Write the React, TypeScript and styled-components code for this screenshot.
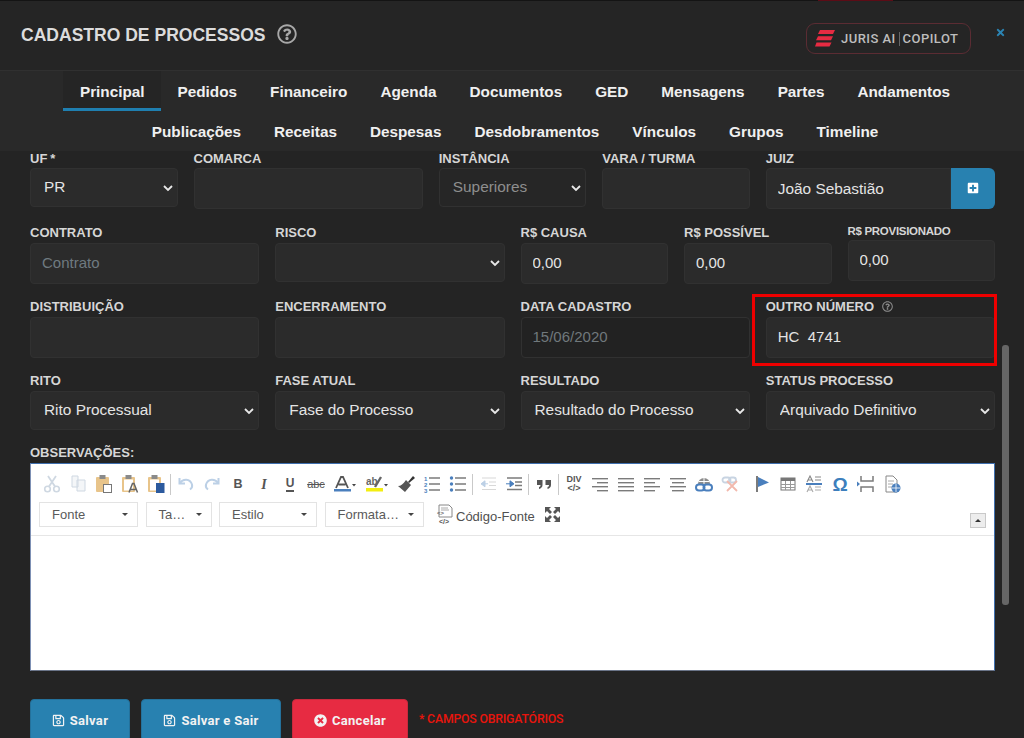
import React from 'react'
import styled, { createGlobalStyle } from 'styled-components'
import { FaRegSave, FaTimesCircle, FaPlusSquare, FaTimes, FaRegQuestionCircle } from 'react-icons/fa'

const GlobalStyle = createGlobalStyle`
    html, body {
        margin: 0;
        height: 100%;
        overflow: hidden;
        background: #242424;
    }

    * {
        box-sizing: border-box;
    }
`

const Modal = styled.div`
    display: flex;
    flex-direction: column;
    position: relative;
    width: 1024px;
    height: 738px;
    overflow: hidden;
    font-family: "Liberation Sans", Arial, sans-serif;
    background: #242424;
`

const Header = styled.header`
    display: flex;
    flex: 0 0 71px;
    align-items: flex-start;
    position: relative;
    padding: 22px 18px 0 21px;
    background: #252525;
    border-top: 1px solid #141414;
    border-bottom: 1px solid #303030;

    &::before {
        content: '';
        position: absolute;
        top: -1px;
        left: 818px;
        width: 75px;
        height: 1px;
        background: #5c0c16;
    }
`

const Title = styled.h1`
    margin: 2px 0 0;
    font-size: 17.55px;
    line-height: 21px;
    font-weight: 700;
    color: #dcdcdc;
`

const HelpMark = styled.span`
    display: inline-flex;
    margin: 1px 0 0 11px;
    font-size: 20px;
    color: #a8a8a8;
`

const CopilotBadge = styled.div`
    display: flex;
    align-items: center;
    width: 165px;
    height: 31px;
    margin-left: auto;
    padding-left: 8px;
    font-family: Roboto, sans-serif;
    font-size: 13px;
    font-weight: 500;
    letter-spacing: 0.45px;
    color: #bdbdbd;
    border: 1px solid #5b2c33;
    border-radius: 9px;
`

const CopilotDivider = styled.span`
    width: 1px;
    height: 14px;
    margin: 0 3px;
    background: #666;
`

const CloseButton = styled.span`
    display: inline-flex;
    margin: 4px 0 0 24px;
    font-size: 11px;
    color: #2b84b3;
`

const Tabs = styled.nav`
    flex: 0 0 80px;
    padding-left: 6px;
    background: #292929;
`

const TabRow = styled.div`
    display: flex;
    justify-content: center;
    height: 40px;
`

const Tab = styled.div<{ $active?: boolean }>`
    height: 40px;
    padding: 0 16.5px;
    font-size: 15.3px;
    line-height: 42px;
    font-weight: 700;
    color: #f0f0f0;
    border-bottom: 3px solid ${p => (p.$active ? '#1f7fb0' : 'transparent')};
    background: ${p => (p.$active ? '#252525' : 'transparent')};
`

const Body = styled.main`
    flex: 1;
    overflow: hidden;
    padding: 0 29px 0 30px;
`

const Label = styled.label<{ $small?: boolean }>`
    display: block;
    height: 16px;
    margin-top: ${p => (p.$small ? -2 : 0)}px;
    margin-bottom: ${p => (p.$small ? 2 : 3)}px;
    font-size: ${p => (p.$small ? 11.5 : 13)}px;
    line-height: 18px;
    font-weight: 700;
    letter-spacing: ${p => (p.$small ? '-0.3px' : '0')};
    white-space: nowrap;
    color: #d6d6d6;
`

const FormGrid = styled.div<{ $first?: boolean }>`
    display: grid;
    grid-template-columns: repeat(12, 1fr);
    column-gap: 16px;
    align-items: start;
    margin-top: ${p => (p.$first ? 0 : 14)}px;

    ${p => p.$first && `
        ${Label} {
            height: 15px;
            margin-bottom: 2px;
            line-height: 16px;
        }
    `}
`

const SecondRow = styled(FormGrid)`
    margin-top: 15px;
`

const Field = styled.div<{ $span: number }>`
    position: relative;
    grid-column: span ${p => p.$span};
    min-width: 0;
`

const Required = styled.span`
    margin-left: 3px;
`

const controlStyles = `
    display: block;
    width: 100%;
    font-family: "Liberation Sans", Arial, sans-serif;
    font-size: 15px;
    color: #e4e4e4;
    background-color: #2b2b2b;
    border: 1px solid #313131;
    border-radius: 4px;
    outline: none;
`

const TextInput = styled.input`
    ${controlStyles}
    height: 41px;
    padding: 0 11px 2px;

    &::placeholder {
        color: #6f7a80;
        opacity: 1;
    }

    &:disabled {
        color: #70787c;
        background-color: #222;
    }
`

const chevron = "url(\"data:image/svg+xml,%3Csvg xmlns='http://www.w3.org/2000/svg' width='12' height='8' viewBox='0 0 12 8'%3E%3Cpath d='M2 2l4 4 4-4' fill='none' stroke='%23e8e8e8' stroke-width='1.8'/%3E%3C/svg%3E\")"

const Select = styled.select<{ $muted?: boolean }>`
    ${controlStyles}
    height: 39px;
    padding: 0 24px 2px 13px;
    font-size: 15.4px;
    color: ${p => (p.$muted ? '#8e8e8e' : '#e4e4e4')};
    background-color: ${p => (p.$muted ? '#262626' : '#2b2b2b')};
    background-image: ${chevron};
    background-repeat: no-repeat;
    background-position: right 3px center;
    appearance: none;
`

const InputGroup = styled.div`
    display: flex;
`

const GroupInput = styled(TextInput)`
    flex: 1;
    min-width: 0;
    padding-bottom: 0;
    font-size: 15.4px;
    border-radius: 4px 0 0 4px;
`

const AddButton = styled.button`
    display: flex;
    flex: 0 0 44px;
    align-items: center;
    justify-content: center;
    padding: 0 0 2px;
    font-size: 12px;
    color: #fff;
    background: #2881b0;
    border: none;
    border-radius: 0 6px 6px 0;
`

const SmallHelp = styled.span`
    display: inline-flex;
    vertical-align: -1px;
    margin-left: 8px;
    font-size: 11px;
    color: #8c8c8c;
`

const Highlight = styled.div`
    position: absolute;
    top: -4px;
    right: -2px;
    bottom: -8px;
    left: -14px;
    border: 3px solid #ee0000;
    pointer-events: none;
`

const EditorBlock = styled.section`
    margin-top: 14px;
`

const Editor = styled.div`
    height: 208px;
    background: #fff;
    border: 1px solid #3f6fae;
    border-bottom-color: #6a7488;
    border-left-color: #7d90b4;
`

const ToolArea = styled.div`
    position: relative;
    height: 72px;
    padding: 7px 0 0 8px;
    border-bottom: 1px solid #e6e6e6;
`

const ToolRow = styled.div`
    display: flex;
    align-items: center;
    height: 26px;
`

const ToolButton = styled.span<{ $width?: number; $gapLeft?: number }>`
    display: flex;
    flex: 0 0 ${p => p.$width ?? 26}px;
    align-items: center;
    justify-content: center;
    height: 26px;
    margin-left: ${p => p.$gapLeft ?? 0}px;
`

const ToolSeparator = styled.span`
    flex: 0 0 1px;
    height: 21px;
    margin: 0 2px 0 1px;
    background: #c9c9c9;
`

const ComboRow = styled.div`
    display: flex;
    align-items: center;
    height: 25px;
    margin-top: 5px;
`

const Combo = styled.div<{ $width: number }>`
    display: flex;
    flex: 0 0 ${p => p.$width}px;
    align-items: center;
    justify-content: space-between;
    height: 25px;
    margin-right: 7.5px;
    padding: 0 9px 0 12px;
    font-family: "Liberation Sans", Arial, sans-serif;
    font-size: 13px;
    color: #5a5a5a;
    background: #fff;
    border: 1px solid #e3e3e3;
`

const Caret = styled.span`
    width: 0;
    height: 0;
    border-top: 3px solid #444;
    border-right: 3px solid transparent;
    border-left: 3px solid transparent;
`

const SourceButton = styled.span`
    display: flex;
    align-items: center;
    gap: 1px;
    margin-left: 5px;
    font-size: 13px;
    color: #505050;
`

const SourceText = styled.span`
    padding-top: 3px;
`

const Collapser = styled.span`
    position: absolute;
    top: 49px;
    right: 8px;
    display: flex;
    align-items: center;
    justify-content: center;
    width: 16px;
    height: 15px;
    background: #ededed;
    border: 1px solid #c9c9c9;

    &::after {
        content: '';
        border-right: 3px solid transparent;
        border-bottom: 3px solid #333;
        border-left: 3px solid transparent;
    }
`

const Actions = styled.div`
    display: flex;
    align-items: center;
    gap: 11px;
    margin-top: 28px;
`

const ActionButton = styled.button<{ $width: number; $danger?: boolean }>`
    display: flex;
    flex: 0 0 ${p => p.$width}px;
    align-items: center;
    justify-content: center;
    gap: 5px;
    height: 42px;
    padding: 0;
    font-family: Roboto, sans-serif;
    font-size: 13px;
    font-weight: 700;
    letter-spacing: 0.3px;
    color: #f2f2f2;
    background: ${p => (p.$danger ? '#e72b42' : '#2881b0')};
    border: 1px solid ${p => (p.$danger ? '#c92a3d' : '#24719b')};
    border-radius: 4px;
`

const RequiredNote = styled.span`
    margin: -2px 0 0 0;
    font-family: Roboto, sans-serif;
    font-size: 12.3px;
    font-weight: 500;
    letter-spacing: -0.2px;
    color: #e8140c;
`

const ScrollThumb = styled.div`
    position: absolute;
    top: 345px;
    left: 1002px;
    width: 7px;
    height: 260px;
    background: #666;
    border-radius: 3px;
`

const G = '#7b7b7b'
const D = '#555'
const B = '#4a7fbd'
const L = '#cfd8e2'

const Ico: React.FC<{ children: React.ReactNode; w?: number }> = ({ children, w = 18 }) => (
    <svg width={w} height="18" viewBox={`0 0 ${w} 18`} fill="none">{children}</svg>
)

// orange clipboard shared by the three paste buttons
const Clip = ({ c = '#e8c48a' }: { c?: string }) => (
    <>
        <rect x="1" y="2" width="13" height="15" rx="1" fill={c} />
        <rect x="4.500" y="0" width="6" height="4" fill="#8a8a8a" />
    </>
)

const Lines = ({ rows }: { rows: [number, number][] }) => (
    <>
        {rows.map(([x, w], i) => (
            <rect key={i} x={x} y={3 + i * 4} width={w} height="1.4" fill={G} />
        ))}
    </>
)

const ToolGlyph = styled.span<{ $size?: number; $color?: string; $serif?: boolean; $under?: boolean; $strike?: boolean; $thin?: boolean }>`
    font-family: ${p => (p.$serif ? '"Liberation Serif", serif' : '"Liberation Sans", sans-serif')};
    font-size: ${p => p.$size ?? 13}px;
    font-weight: ${p => (p.$thin ? 400 : 700)};
    font-style: ${p => (p.$serif ? 'italic' : 'normal')};
    line-height: 13px;
    color: ${p => p.$color ?? D};
    text-decoration: ${p => (p.$strike ? 'line-through' : 'none')};
    border-bottom: ${p => (p.$under ? `2px solid ${D}` : 'none')};
`

const DivGlyph = styled.span`
    font-family: "Liberation Sans", sans-serif;
    font-size: 9px;
    font-weight: 700;
    line-height: 9px;
    text-align: center;
    color: ${D};
`

const firstRow: { el: React.ReactNode; w?: number; gap?: number; sep?: boolean }[] = [
    { el: <Ico><circle cx="4.500" cy="14" r="2.800" stroke={L} strokeWidth="1.6" /><circle cx="13.500" cy="14" r="2.800" stroke={L} strokeWidth="1.6" /><path d="M6 11.500L13 1M12 11.500L5 1" stroke={L} strokeWidth="1.8" /></Ico> },
    { el: <Ico><path d="M3 1h6v11H3zM8 5h8v11H8z" fill="#f4f6f8" stroke={L} /></Ico> },
    { el: <Ico><Clip /><rect x="8.500" y="9.500" width="8" height="8" fill="#fff" stroke="#777" /></Ico> },
    { el: <Ico><Clip /><rect x="3" y="4.500" width="9" height="11" fill="#fff" /><path d="M8 17.500l3.500-9h1.500l3.500 9M9.500 14.500h5.500" stroke="#666" strokeWidth="1.500" /></Ico> },
    { el: <Ico><Clip /><rect x="3" y="4.500" width="9" height="11" fill="#fff" /><rect x="9" y="8" width="8.500" height="10" fill="#2c5a9e" /></Ico>, sep: true },
    { el: <Ico><path d="M2.500 3v5.500H8" stroke="#bcd0e6" strokeWidth="2" /><path d="M3 8c3-4.500 10-4.500 12 1.500.5 2-.5 4-2 5" stroke="#bcd0e6" strokeWidth="2" /></Ico> },
    { el: <Ico><path d="M15.500 3v5.500H10" stroke="#bcd0e6" strokeWidth="2" /><path d="M15 8C12 3.500 5 3.500 3 9.500c-.5 2 .5 4 2 5" stroke="#bcd0e6" strokeWidth="2" /></Ico> },
    { el: <ToolGlyph $size={12.500}>B</ToolGlyph> },
    { el: <ToolGlyph $size={14} $serif>I</ToolGlyph> },
    { el: <ToolGlyph $size={12} $under>U</ToolGlyph> },
    { el: <ToolGlyph $size={11} $strike $thin>abc</ToolGlyph> },
    { el: <Ico w={24}><path d="M3 13L8 2h2l5 11M5.500 9.500h7" stroke={D} strokeWidth="1.800" /><rect x="1" y="14" width="17" height="2.500" fill="#4a7fbd" /><path d="M19 9h4l-2 2.500z" fill="#444" /></Ico>, w: 32 },
    { el: <Ico w={24}><text x="1" y="10" fontFamily="Liberation Sans, sans-serif" fontSize="10" fontWeight="700" fill="#666">ab</text><path d="M10 12L16 2" stroke="#666" strokeWidth="2.400" /><rect x="1" y="13" width="17" height="3.500" fill="#f3ee10" /><path d="M19 9h4l-2 2.500z" fill="#444" /></Ico>, w: 32 },
    { el: <Ico><path d="M11 7l5-6 2 2-6 5z" fill="#333" /><path d="M9 5l5 5-6 7-7-6c3 0 5-2 8-6z" fill="#555" /></Ico> },
    { el: <Ico><path d="M6 3h11M6 9h11M6 15h11" stroke={G} strokeWidth="1.500" /><text x="1" y="6" fontSize="6" fontWeight="700" fill={B} fontFamily="Liberation Sans, sans-serif">1</text><text x="1" y="12" fontSize="6" fontWeight="700" fill={B} fontFamily="Liberation Sans, sans-serif">2</text><text x="1" y="18" fontSize="6" fontWeight="700" fill={B} fontFamily="Liberation Sans, sans-serif">3</text></Ico> },
    { el: <Ico><path d="M6 3h11M6 9h11M6 15h11" stroke={G} strokeWidth="1.500" /><circle cx="2.500" cy="3" r="1.700" fill={B} /><circle cx="2.500" cy="9" r="1.700" fill={B} /><circle cx="2.500" cy="15" r="1.700" fill={B} /></Ico>, sep: true },
    { el: <Ico><path d="M3 3h14M10 7h7M10 10.500h7M3 14.500h14" stroke="#d8d8d8" strokeWidth="1.200" /><path d="M2 8.800h7M2 8.800l4-3v6z" fill="#bcd0e6" stroke="#bcd0e6" /></Ico> },
    { el: <Ico><path d="M2 3h15M10 7h7M10 10.500h7M2 14.500h15" stroke={G} strokeWidth="1.300" /><path d="M1 8.800h7M9 8.800l-4-3v6z" fill={B} stroke={B} /></Ico>, sep: true },
    { el: <Ico w={16}><path d="M1 5h5.500v5c0 2-1.500 3.500-3.500 4v-2c1 0 1.500-1 1.500-2H1zM9.500 5H15v5c0 2-1.500 3.500-3.500 4v-2c1 0 1.500-1 1.500-2H9.500z" fill={D} /></Ico>, sep: true },
    { el: <DivGlyph>DIV<br />&lt;/&gt;</DivGlyph> },
    { el: <Ico w={16}><Lines rows={[[0, 16], [5, 11], [0, 16], [5, 11]]} /></Ico> },
    { el: <Ico w={16}><Lines rows={[[0, 16], [0, 16], [0, 16], [0, 16]]} /></Ico> },
    { el: <Ico w={16}><Lines rows={[[0, 16], [0, 11], [0, 16], [0, 11]]} /></Ico> },
    { el: <Ico w={16}><Lines rows={[[0, 16], [2, 12], [0, 16], [2, 12]]} /></Ico> },
    { el: <Ico><path d="M3 9a6 6 0 0 1 12 0z" fill="#8c8c8c" /><path d="M9 3v6M3.500 6.500h11" stroke="#fff" /><rect x="1" y="9.500" width="8.500" height="6" rx="3" stroke={B} strokeWidth="2" /><rect x="8.500" y="9.500" width="8.500" height="6" rx="3" stroke={B} strokeWidth="2" /></Ico> },
    { el: <Ico><rect x="1.500" y="2.500" width="8" height="5" rx="2.500" stroke="#c8d4e2" strokeWidth="1.800" /><rect x="8" y="2.500" width="7" height="5" rx="2.500" stroke="#c8d4e2" strokeWidth="1.800" /><path d="M6 6l10 10M16 6L6 16" stroke="#f2b9ad" strokeWidth="1.800" /></Ico> },
    { el: <Ico><rect x="3" y="1" width="2" height="16" fill="#7b7b7b" /><path d="M5 2l11 5.500L5 12z" fill={B} /></Ico>, gap: 6 },
    { el: <Ico w={16}><rect x="1" y="3" width="14" height="12" fill="#fff" stroke="#777" /><rect x="1" y="3" width="14" height="3" fill="#777" /><path d="M1 9.500h14M1 12.500h14M5.500 6v9M10.500 6v9" stroke="#999" /></Ico> },
    { el: <Ico><path d="M2 7l3-6 3 6M3 5h4M10 2h6M10 5h6" stroke="#888" strokeWidth="1.100" /><rect x="1" y="8" width="16" height="2" fill={B} /><path d="M2 17l3-6 3 6M3 15h4M10 12h6M10 15h6" stroke="#aaa" strokeWidth="1.100" /></Ico> },
    { el: <ToolGlyph $size={19} $color="#3d7fbd">Ω</ToolGlyph> },
    { el: <Ico><path d="M4 1v5h12V1M4 17v-5h12v5" stroke={G} strokeWidth="1.500" /><path d="M0 6.500l3 2.500-3 2.500z" fill={B} /></Ico> },
    { el: <Ico><path d="M3 1h7l4 4v12H3z" fill="#fff" stroke="#888" /><path d="M5 6h6M5 9h5M5 12h4" stroke="#aaa" /><circle cx="13" cy="13" r="4.500" fill={B} /><path d="M9 13h8M13 9v8" stroke="#fff" strokeWidth=".8" /></Ico> },
]

export default function App() {
    return (
        <Modal>
            <GlobalStyle />
            <Header>
                <Title>CADASTRO DE PROCESSOS</Title>
                <HelpMark><FaRegQuestionCircle /></HelpMark>
                <CopilotBadge>
                    <svg width="20" height="17" viewBox="0 0 20 17" style={{ marginRight: 6 }}>
                        <path d="M5 0h15l-2 4H3zM3 6.200h15l-2 4H1zM1.500 12.400h15l-2 4H0z" fill="#e72b42" />
                    </svg>
                    JURIS AI<CopilotDivider />COPILOT
                </CopilotBadge>
                <CloseButton><FaTimes /></CloseButton>
            </Header>
            <Tabs>
                <TabRow>
                    <Tab $active>Principal</Tab>
                    {['Pedidos', 'Financeiro', 'Agenda', 'Documentos', 'GED', 'Mensagens', 'Partes', 'Andamentos'].map(t => <Tab key={t}>{t}</Tab>)}
                </TabRow>
                <TabRow>
                    {['Publicações', 'Receitas', 'Despesas', 'Desdobramentos', 'Vínculos', 'Grupos', 'Timeline'].map(t => <Tab key={t}>{t}</Tab>)}
                </TabRow>
            </Tabs>
            <Body>
                <FormGrid $first>
                    <Field $span={2}>
                        <Label>UF<Required>*</Required></Label>
                        <Select defaultValue="PR"><option>PR</option></Select>
                    </Field>
                    <Field $span={3}><Label>COMARCA</Label><TextInput readOnly /></Field>
                    <Field $span={2}><Label>INSTÂNCIA</Label><Select $muted defaultValue="Superiores"><option>Superiores</option></Select></Field>
                    <Field $span={2}><Label>VARA / TURMA</Label><TextInput readOnly /></Field>
                    <Field $span={3}>
                        <Label>JUIZ</Label>
                        <InputGroup>
                            <GroupInput readOnly value="João Sebastião" />
                            <AddButton><FaPlusSquare /></AddButton>
                        </InputGroup>
                    </Field>
                </FormGrid>
                <SecondRow>
                    <Field $span={3}><Label>CONTRATO</Label><TextInput readOnly placeholder="Contrato" /></Field>
                    <Field $span={3}><Label>RISCO</Label><Select /></Field>
                    <Field $span={2}><Label>R$ CAUSA</Label><TextInput readOnly value="0,00" /></Field>
                    <Field $span={2}><Label>R$ POSSÍVEL</Label><TextInput readOnly value="0,00" /></Field>
                    <Field $span={2}><Label $small>R$ PROVISIONADO</Label><TextInput readOnly value="0,00" /></Field>
                </SecondRow>
                <FormGrid>
                    <Field $span={3}><Label>DISTRIBUIÇÃO</Label><TextInput readOnly /></Field>
                    <Field $span={3}><Label>ENCERRAMENTO</Label><TextInput readOnly /></Field>
                    <Field $span={3}><Label>DATA CADASTRO</Label><TextInput disabled value="15/06/2020" /></Field>
                    <Field $span={3}>
                        <Label>OUTRO NÚMERO<SmallHelp><FaRegQuestionCircle /></SmallHelp></Label>
                        <TextInput readOnly value="HC  4741" />
                        <Highlight />
                    </Field>
                </FormGrid>
                <FormGrid>
                    <Field $span={3}><Label>RITO</Label><Select defaultValue="Rito Processual"><option>Rito Processual</option></Select></Field>
                    <Field $span={3}><Label>FASE ATUAL</Label><Select defaultValue="Fase do Processo"><option>Fase do Processo</option></Select></Field>
                    <Field $span={3}><Label>RESULTADO</Label><Select defaultValue="Resultado do Processo"><option>Resultado do Processo</option></Select></Field>
                    <Field $span={3}><Label>STATUS PROCESSO</Label><Select defaultValue="Arquivado Definitivo"><option>Arquivado Definitivo</option></Select></Field>
                </FormGrid>
                <EditorBlock>
                    <Label>OBSERVAÇÕES:</Label>
                    <Editor>
                        <ToolArea>
                            <ToolRow>
                                {firstRow.map((b, i) => (
                                    <React.Fragment key={i}>
                                        <ToolButton $width={b.w} $gapLeft={b.gap}>{b.el}</ToolButton>
                                        {b.sep && <ToolSeparator />}
                                    </React.Fragment>
                                ))}
                            </ToolRow>
                            <ComboRow>
                                <Combo $width={99}>Fonte<Caret /></Combo>
                                <Combo $width={66}>Ta…<Caret /></Combo>
                                <Combo $width={98}>Estilo<Caret /></Combo>
                                <Combo $width={99}>Formata…<Caret /></Combo>
                                <SourceButton>
                                    <svg width="19" height="21" viewBox="0 0 19 21" fill="none">
                                        <path d="M3 1h10l3 3v9H3z" fill="#fff" stroke="#888" />
                                        <path d="M5 4h7M5 6h8" stroke="#aaa" />
                                        <text x="1" y="11" fontSize="6" fontFamily="Liberation Sans, sans-serif" fontWeight="700" fill="#666">&lt;&gt;</text>
                                        <text x="3" y="20" fontSize="7" fontFamily="Liberation Sans, sans-serif" fontWeight="700" fill="#555">&lt;/&gt;</text>
                                    </svg>
                                    <SourceText>Código-Fonte</SourceText>
                                </SourceButton>
                                <ToolButton $width={18} $gapLeft={9}>
                                    <svg width="17" height="17" viewBox="0 0 17 17" fill={D}>
                                        <path d="M1 1h6L5 3l3 3-2 2-3-3-2 2zM16 1v6l-2-2-3 3-2-2 3-3-2-2zM1 16v-6l2 2 3-3 2 2-3 3 2 2zM16 16h-6l2-2-3-3 2-2 3 3 2-2z" />
                                    </svg>
                                </ToolButton>
                            </ComboRow>
                            <Collapser />
                        </ToolArea>
                    </Editor>
                </EditorBlock>
                <Actions>
                    <ActionButton $width={100}><FaRegSave />Salvar</ActionButton>
                    <ActionButton $width={140}><FaRegSave />Salvar e Sair</ActionButton>
                    <ActionButton $width={116} $danger><FaTimesCircle />Cancelar</ActionButton>
                    <RequiredNote>* CAMPOS OBRIGATÓRIOS</RequiredNote>
                </Actions>
            </Body>
            <ScrollThumb />
        </Modal>
    )
}
